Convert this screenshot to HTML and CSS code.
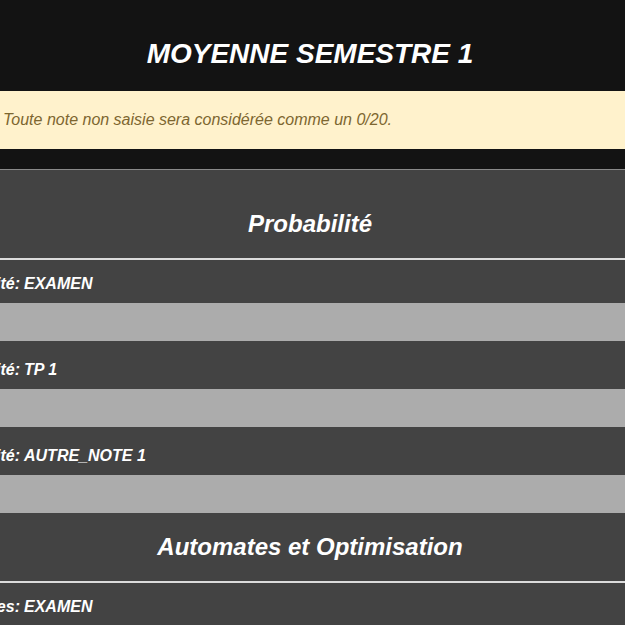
FILE: index.html
```html
<!DOCTYPE html>
<html lang="fr">
<head>
<meta charset="utf-8">
<title>Moyenne semestre 1</title>
<link rel="stylesheet" href="styles.css">
</head>
<body>
<header class="top">
  <h1 class="title">MOYENNE SEMESTRE 1</h1>
  <p class="notice">Toute note non saisie sera considérée comme un 0/20.</p>
</header>
<main class="subjects">
  <section class="subject">
    <h2 class="subject-name">Probabilité</h2>
    <div class="note">
      <label class="note-label"><span class="subj">Probabilité:</span><span class="kind">EXAMEN</span></label>
      <input class="note-input" type="text">
    </div>
    <div class="note">
      <label class="note-label"><span class="subj">Probabilité:</span><span class="kind">TP 1</span></label>
      <input class="note-input" type="text">
    </div>
    <div class="note">
      <label class="note-label"><span class="subj">Probabilité:</span><span class="kind">AUTRE_NOTE 1</span></label>
      <input class="note-input" type="text">
    </div>
  </section>
  <section class="subject">
    <h2 class="subject-name">Automates et Optimisation</h2>
    <div class="note">
      <label class="note-label"><span class="subj">Automates:</span><span class="kind">EXAMEN</span></label>
      <input class="note-input" type="text">
    </div>
    <div class="note">
      <label class="note-label"><span class="subj">Automates:</span><span class="kind">TP 1</span></label>
      <input class="note-input" type="text">
    </div>
  </section>
</main>
</body>
</html>
```
FILE: styles.css
```css
html, body {
  margin: 0;
  padding: 0;
}
body {
  background: #131313;
  font-family: "Liberation Sans", Arial, sans-serif;
  color: #ffffff;
  overflow-x: hidden;
}
.top {
  padding: 38px 0 20px;
}
.title {
  margin: 0 0 21px;
  padding-right: 5px;
  text-align: center;
  font-size: 28px;
  line-height: 32px;
  font-style: italic;
  font-weight: bold;
}
.notice {
  margin: 0;
  padding: 20px 3px;
  background: #fff2cc;
  color: #7d6630;
  font-size: 16px;
  line-height: 18px;
  font-style: italic;
}
.subjects {
  background: #434343;
  border-top: 1px solid #8a8a8a;
  padding-top: 20px;
}
.subject-name {
  margin: 0;
  padding: 20px 5px 20px 0;
  text-align: center;
  font-size: 24px;
  line-height: 28px;
  font-style: italic;
  font-weight: bold;
  border-bottom: 2px solid #dcdcdc;
}
.note {
  display: flex;
  flex-direction: column;
}
.note-label {
  display: flex;
  padding: 20px 0 10px;
  font-size: 16px;
  line-height: 18px;
  font-style: italic;
  font-weight: bold;
  white-space: nowrap;
}
.subject-name + .note .note-label {
  padding-top: 15px;
  padding-bottom: 10px;
}
.subj {
  flex: none;
  width: 20px;
  display: flex;
  justify-content: flex-end;
}
.kind {
  margin-left: 4px;
}
.note-input {
  display: block;
  box-sizing: border-box;
  width: 100%;
  height: 38px;
  margin: 0;
  border: 0;
  padding: 0 8px;
  background: #acacac;
  font-family: inherit;
}
```
